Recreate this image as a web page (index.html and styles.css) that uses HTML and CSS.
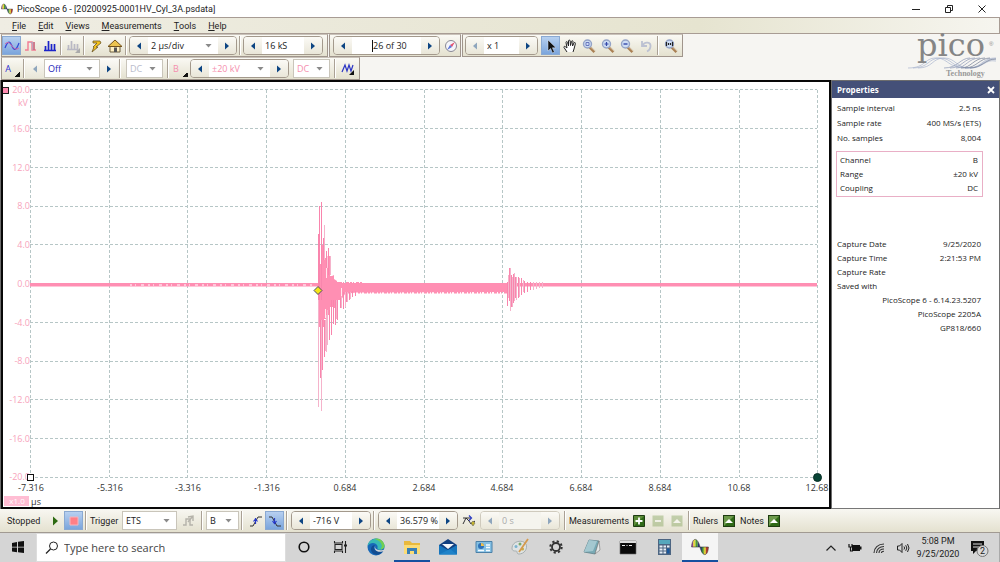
FILE: index.html
```html
<!DOCTYPE html>
<html lang="en">
<head>
<meta charset="utf-8">
<title>PicoScope 6</title>
<link rel="stylesheet" href="styles.css">
</head>
<body>
<svg class="defs" aria-hidden="true">
  <defs><clipPath id="sine"><path d="M.5 8C1-1 6-1 8 8zM8 8c2 9 7 9 7.500 0z"/></clipPath></defs>
  <symbol id="left" viewBox="0 0 8 8"><path d="M6 0.500V7.500L2 4z" fill="currentColor"/></symbol>
  <symbol id="right" viewBox="0 0 8 8"><path d="M2 0.500V7.500L6 4z" fill="currentColor"/></symbol>
  <symbol id="lens" viewBox="0 0 16 16"><path d="M8 8.500L13.500 14" stroke="#a97f52" stroke-width="2.600"/><path d="M9 8.500L14 13" stroke="#d8c4a8" stroke-width="1"/><circle cx="6.500" cy="6" r="4" fill="#cddcf4" stroke="#94a3c6" stroke-width="1.400"/></symbol>
  <symbol id="pico" viewBox="0 0 16 16"><g clip-path="url(#sine)"><path d="M0 0h2.200v16H0z" fill="#a0489a"/><path d="M2 0h2v16H2z" fill="#e3d53a"/><path d="M4 0h2v16H4z" fill="#4a9a30"/><path d="M6 0h4v16H6z" fill="#24307c"/><path d="M9.600 8h1.800v8H9.600z" fill="#3e8c34"/><path d="M11.400 8h1.800v8h-1.800z" fill="#dccb2c"/><path d="M13.200 8H16v8h-2.800z" fill="#b5392f"/></g><path d="M.5 8C1-1 6-1 8 8zM8 8c2 9 7 9 7.500 0z" fill="none" stroke="#333" stroke-width=".5"/></symbol>
  <symbol id="up" viewBox="0 0 12 12"><rect x=".5" y=".5" width="11" height="11" fill="#2f6a17" stroke="#1f3d12"/><path d="M1 1h10L1 11z" fill="#6d9a4b"/><path d="M2 8L6 4l4 4z" fill="#fff"/></symbol>
</svg>
<div class="app">
  <header class="titlebar">
    <svg class="i12" viewBox="0 0 16 16"><use href="#pico"/></svg>
    <span class="title">PicoScope 6 - [20200925-0001HV_Cyl_3A.psdata]</span>
    <div class="window-buttons">
      <button aria-label="Minimize"><svg class="i10" viewBox="0 0 10 10"><path d="M1 5.500h8" stroke="#222"/></svg></button>
      <button aria-label="Restore"><svg class="i10" viewBox="0 0 10 10"><path d="M1.500 3.500h5v5h-5zM3.500 3V1.500h5v5H7" fill="none" stroke="#222"/></svg></button>
      <button aria-label="Close"><svg class="i10" viewBox="0 0 10 10"><path d="M1.500 1.500l7 7M8.500 1.500l-7 7" stroke="#222"/></svg></button>
    </div>
  </header>
  <nav class="menubar">
    <button><u>F</u>ile</button><button><u>E</u>dit</button><button><u>V</u>iews</button><button><u>M</u>easurements</button><button><u>T</u>ools</button><button><u>H</u>elp</button>
  </nav>
  <div class="tools">
    <div class="rows">
      <div class="row">
        <div class="group capture">
          <button class="tb on" aria-label="Scope mode"><svg class="i16" viewBox="0 0 16 16"><path d="M1 10C4 2 6 3 8 8s4 5 7-3" fill="none" stroke="#3346d6" stroke-width="1.200"/><path d="M1 6c3-3 5-1 7 2s4 4 7 2" fill="none" stroke="#d46aa8"/></svg></button>
          <button class="tb" aria-label="Persistence mode"><svg class="i16" viewBox="0 0 16 16"><path d="M2 12h3V4h4v8h4" fill="none" stroke="#f27c93" stroke-width="1.400"/><path d="M7 4h5v8H9V6" fill="#a9a2c2" opacity=".7"/><path d="M11 4v8" stroke="#e0404f"/></svg></button>
          <button class="tb" aria-label="Spectrum mode"><svg class="i16" viewBox="0 0 16 16"><path d="M2 12.500h12M3.500 12V8M6.500 12V3M9.500 12V6M12.500 12V6" stroke="#1b23c9" stroke-width="1.700"/></svg></button>
          <i class="sep"></i>
          <button class="tb" aria-label="Hidden view" disabled><svg class="i16" viewBox="0 0 16 16"><path d="M2 11.500h10M3.500 11V7M6.500 11V3M9.500 11V6M12.500 13V6" stroke="#b9b8c4" stroke-width="1.700"/><path d="M15 10v5h-5z" fill="#aaa"/></svg></button>
          <i class="sep"></i>
          <button class="tb" aria-label="Automatic setup"><svg class="i16" viewBox="0 0 16 16"><path d="M5 3h7l1 2-5 4h2l-6 5 2-5H5l4-4H5z" fill="#f3c21d" stroke="#6b5627" stroke-width=".8"/></svg></button>
          <button class="tb" aria-label="Home"><svg class="i16" viewBox="0 0 16 16"><path d="M3 8h10v6H3z" fill="#fff1c4" stroke="#6b5c3d"/><path d="M8 2l7 6.500H1z" fill="#edc44f" stroke="#74531d"/><path d="M7 9.500h3V14H7z" fill="#555"/></svg></button>
          <i class="sep"></i>
          <div class="spin"><button aria-label="Shorter time"><svg><use href="#left"/></svg></button><span class="select w70"><select aria-label="Timebase"><option>2 µs/div</option></select></span><button aria-label="Longer time"><svg><use href="#right"/></svg></button></div>
          <i class="sep"></i>
          <div class="spin"><button aria-label="Fewer samples"><svg><use href="#left"/></svg></button><input class="w42" aria-label="Samples" value="16 kS"><button aria-label="More samples"><svg><use href="#right"/></svg></button></div>
        </div>
        <div class="group buffer">
          <div class="spin"><button aria-label="Previous waveform"><svg><use href="#left"/></svg></button><span class="field w69"><i class="caret"></i><input aria-label="Waveform" value="26 of 30"></span><button aria-label="Next waveform"><svg><use href="#right"/></svg></button></div>
          <button class="tb" aria-label="Buffer navigator"><svg class="i16" viewBox="0 0 16 16"><circle cx="8" cy="8" r="5.500" fill="#f5f5fa" stroke="#888894"/><path d="M12 4L9 9 7 7z" fill="#e35271"/><path d="M4 12l3-5 2 2z" fill="#5a74d8"/></svg></button>
        </div>
        <div class="group zoomer">
          <div class="spin"><button aria-label="Zoom down" disabled><svg><use href="#left"/></svg></button><input class="w35" aria-label="Zoom factor" value="x 1"><button aria-label="Zoom up"><svg><use href="#right"/></svg></button></div>
          <button class="tb on" aria-label="Select"><svg class="i16" viewBox="0 0 16 16"><path d="M5 2v11l2.600-2.500L9.500 15l1.900-.9-2-4.300H13z" fill="#111" stroke="#dfe8f8" stroke-width=".5"/></svg></button>
          <button class="tb" aria-label="Pan"><svg class="i16" viewBox="0 0 16 16"><path d="M5 14L2 9.500c-.5-1 .7-1.600 1.500-.7L5 10 4 4.500c0-1.200 1.300-1.200 1.600 0L6.500 8 6.500 3c0-1.200 1.600-1.200 1.700 0L8.500 7.500 9.500 3.500c.3-1.200 1.600-1 1.500.3L10.500 8l1.500-3c.5-1 1.700-.5 1.400.6L12 11l-1 3" fill="#fff" stroke="#222"/></svg></button>
          <button class="tb" aria-label="Marquee zoom"><svg class="i16" viewBox="0 0 16 16"><use href="#lens"/><path d="M5 4.500h3v3H5z" fill="none" stroke="#6877bd"/></svg></button>
          <button class="tb" aria-label="Zoom in"><svg class="i16" viewBox="0 0 16 16"><use href="#lens"/><path d="M4.500 6h4M6.500 4v4" stroke="#3447a8" stroke-width="1.200"/></svg></button>
          <button class="tb" aria-label="Zoom out"><svg class="i16" viewBox="0 0 16 16"><use href="#lens"/><path d="M4.500 6h4" stroke="#3447a8" stroke-width="1.400"/></svg></button>
          <button class="tb" aria-label="Undo zoom" disabled><svg class="i16" viewBox="0 0 16 16"><path d="M4 3v5h5M4.500 7.500C7 3 13 4 12.500 8.500 12.300 11 11 12.500 9 13.500" fill="none" stroke="#bcc1d2" stroke-width="1.800"/></svg></button>
          <i class="sep"></i>
          <button class="tb" aria-label="Zoom to full view"><svg class="i16" viewBox="0 0 16 16"><use href="#lens"/><path d="M3.500 4v4M9.500 4v4M5.500 5v2M7.500 5v2" stroke="#222" stroke-width="1.200"/></svg></button>
        </div>
      </div>
      <div class="row">
        <div class="group channels">
          <button class="ch a" aria-label="Channel A options">A</button>
          <i class="sep"></i>
          <div class="flat"><button aria-label="A range down" disabled><svg><use href="#left"/></svg></button><span class="select boxed blue w56"><select aria-label="Channel A range"><option>Off</option></select></span><button aria-label="A range up"><svg><use href="#right"/></svg></button></div>
          <i class="sep"></i>
          <span class="select boxed dim w37"><select aria-label="Channel A coupling" disabled><option>DC</option></select></span>
          <i class="sep"></i>
          <button class="ch b" aria-label="Channel B options">B</button>
          <div class="spin"><button aria-label="B range down"><svg><use href="#left"/></svg></button><span class="select pink w61"><select aria-label="Channel B range"><option>±20 kV</option></select></span><button aria-label="B range up"><svg><use href="#right"/></svg></button></div>
          <span class="select boxed pink w37"><select aria-label="Channel B coupling"><option>DC</option></select></span>
          <i class="sep"></i>
          <button class="tb wide" aria-label="Digital channels"><svg class="i16" viewBox="0 0 16 16"><path d="M2 11L5 4l2 6 2-6 2 6 2-6" fill="none" stroke="#2b35c4" stroke-width="1.200"/><path d="M14 9v5H9z" fill="#111"/></svg></button>
        </div>
      </div>
    </div>
    <svg class="logo" viewBox="0 0 92 44" role="img" aria-label="pico Technology">
      <g fill="none" stroke="#a9b4ce" stroke-width=".7"><path d="M0 33C18 33 16 23 28 23S40 33 58 33 72 23 88 23"/><path d="M5 33C21 33 20 23 32 23S44 33 60 33 74 23 88 24"/><path d="M10 33C25 33 24 23 36 23S48 33 62 33 76 24 88 26"/><path d="M36 33C50 33 52 23 62 23M42 33C54 33 56 23 67 23M48 33C58 33 60 23 72 23" stroke="#8995b3"/><path d="M53 33C63 33 66 23 77 23M57 33C68 33 72 23 82 23M62 33C74 33 77 24 88 24" stroke="#6d7891"/></g>
      <text x="9" y="21" class="logo-name">pico</text><text x="81" y="11" class="logo-mark">®</text>
      <text x="38" y="41" class="logo-sub">Technology</text>
    </svg>
  </div>
  <main class="main">
    <section class="scope">
      <svg class="plot" viewBox="3 82 826 425" role="img" aria-label="Channel B waveform">
        <g class="grid"><path d="M30 89.500H817M30 128.500H817M30 167.500H817M30 206.500H817M30 244.500H817M30 283.500H817M30 322.500H817M30 361.500H817M30 399.500H817M30 438.500H817M30 477.500H817"/><path d="M30.500 90V477M109.500 90V477M187.500 90V477M266.500 90V477M345.500 90V477M424.500 90V477M502.500 90V477M581.500 90V477M660.500 90V477M739.500 90V477M817.500 90V477"/></g>
        <g class="volts"><text x="30" y="93">20.0</text><text x="28" y="106">kV</text><text x="30" y="132">16.0</text><text x="30" y="171">12.0</text><text x="30" y="209">8.0</text><text x="30" y="248">4.0</text><text x="30" y="287">0.0</text><text x="30" y="326">-4.0</text><text x="30" y="364">-8.0</text><text x="30" y="403">-12.0</text><text x="30" y="442">-16.0</text><text x="30" y="480">-20.0</text></g>
        <g class="times"><text x="31" y="491">-7.316</text><text x="110" y="491">-5.316</text><text x="188" y="491">-3.316</text><text x="267" y="491">-1.316</text><text x="345" y="491">0.684</text><text x="424" y="491">2.684</text><text x="502" y="491">4.684</text><text x="581" y="491">6.684</text><text x="660" y="491">8.684</text><text x="739" y="491">10.68</text><text x="817" y="491">12.68</text><text x="36" y="505">µs</text></g>
        <rect x="4" y="496" width="25" height="10" fill="#ffbdd3"/><text x="17" y="504" class="scale">x1.0</text>
        <g class="wave">
          <path d="M30 283H817V286.500H30z"/>
          <path d="M318 283V264H322V245H324.500V258H326.500V256H327.500V268H328.500V256H330V276H332L334 275V279L337 281V282H340V283H507V292L356 292.500 345 294 341 300H337.500V308H333V307H330V315H326V319H324V327H319L318 290z"/>
          <path class="strong" d="M318.500 234V300M319.500 206V300M321.500 202V300M323.500 238V260M326.500 251V270M328.500 248V275M320.500 320V378M322.500 320V370M324.500 320V357M329.500 310V340M331.500 300V335M333.500 300V324M335.500 300V325M337.500 300V320M340.500 298V308M343.500 292V309M346.500 292V302M349.500 292V300M352.500 291V297M355.500 291V296M507.500 282V306M509.500 268V301M511.500 275V307M513.500 274V303M515.500 277V298M518.500 277V298M521.500 278V295M524.500 281V293M527.500 282V292M530.500 282V290"/>
          <path class="pale" d="M318.500 300V407M321.500 320V411M324.500 225V260M326.500 315V352M327.500 310V345M330.500 256V275M325.500 320V351M336.500 300V319M341.500 295V308M345.500 292V307M347.500 292V302M350.500 292V299M508.500 275V298M510.500 268V311M512.500 277V307M514.500 273V301M516.500 277V300M519.500 278V297M523.500 280V292M533.500 282V290M536.500 282V289M539.500 282V288M542.500 282V288"/>
          <path class="teeth" d="M358 292.500H507"/>
          <path class="teeth upper" d="M340 282.500H362"/>
          <path class="dots" d="M130 285H312"/>
          <path class="cut" d="M326.500 268V278M325.500 309V318M341.500 288V296"/>
        </g>
        <path d="M318 286.500l4 4-4 4-4-4z" fill="#f5e616" stroke="#4a4a63"/>
        <rect x="2.500" y="87.500" width="6" height="6" fill="#ff8cb2" stroke="#222"/>
        <rect x="27.500" y="474.500" width="6" height="6" fill="#fff" stroke="#111"/>
        <circle cx="817.500" cy="477.500" r="4" fill="#084536" stroke="#072c24"/>
      </svg>
    </section>
    <aside class="props">
      <div class="props-head"><h2>Properties</h2><button aria-label="Close properties"><svg class="i10" viewBox="0 0 10 10"><path d="M2 2l6 6M8 2l-6 6" stroke="#fff" stroke-width="1.800"/></svg></button></div>
      <div class="props-body">
        <dl class="sampling"><dt>Sample interval</dt><dd>2.5 ns</dd><dt>Sample rate</dt><dd>400 MS/s (ETS)</dd><dt>No. samples</dt><dd>8,004</dd></dl>
        <dl class="channel"><dt>Channel</dt><dd>B</dd><dt>Range</dt><dd>±20 kV</dd><dt>Coupling</dt><dd>DC</dd></dl>
        <dl class="saved"><dt>Capture Date</dt><dd>9/25/2020</dd><dt>Capture Time</dt><dd>2:21:53 PM</dd><dt>Capture Rate</dt><dd></dd><dt>Saved with</dt><dd></dd><dd class="full">PicoScope 6 - 6.14.23.5207</dd><dd class="full">PicoScope 2205A</dd><dd class="full">GP818/660</dd></dl>
      </div>
    </aside>
  </main>
  <div class="status">
    <span class="stopped">Stopped</span>
    <button class="tb" aria-label="Start"><svg class="i16" viewBox="0 0 16 16"><path d="M6 3.500v9L11 8z" fill="#2d6a12"/></svg></button>
    <button class="tb on" aria-label="Stop"><svg class="i16" viewBox="0 0 16 16"><path d="M4 4h8v8H4z" fill="#ff7f86" stroke="#f4b6bd"/></svg></button>
    <i class="sep"></i>
    <label class="trigger" for="trigger">Trigger</label>
    <span class="select boxed w55"><select id="trigger"><option>ETS</option></select></span>
    <button class="tb wide" aria-label="Advanced triggers" disabled><svg class="i16" viewBox="0 0 16 16"><path d="M3 12h3V6h4v6h3" fill="none" stroke="#b5b3aa" stroke-width="1.400"/><path d="M8 4l5-1v5M13 3L8 9" fill="none" stroke="#b5b3aa" stroke-width="1.400"/></svg></button>
    <i class="sep"></i>
    <span class="select boxed w33"><select aria-label="Trigger source"><option>B</option></select></span>
    <i class="sep"></i>
    <button class="tb" aria-label="Rising edge"><svg class="i16" viewBox="0 0 16 16"><path d="M2 13h3l5-9h4" fill="none" stroke="#333"/><path d="M7.500 5v6M5.500 8.500L7.500 6l2 2.500" fill="none" stroke="#2638c8" stroke-width="1.200"/></svg></button>
    <button class="tb on" aria-label="Falling edge"><svg class="i16" viewBox="0 0 16 16"><path d="M2 4h3l5 9h4" fill="none" stroke="#333"/><path d="M7.500 5v6M5.500 8l2 2.500 2-2.500" fill="none" stroke="#2638c8" stroke-width="1.200"/></svg></button>
    <i class="sep"></i>
    <div class="spin"><button aria-label="Lower threshold"><svg><use href="#left"/></svg></button><input class="w42" aria-label="Threshold" value="-716 V"><button aria-label="Raise threshold"><svg><use href="#right"/></svg></button></div>
    <i class="sep"></i>
    <div class="spin"><button aria-label="Less pre-trigger"><svg><use href="#left"/></svg></button><input class="w42" aria-label="Pre-trigger" value="36.579 %"><button aria-label="More pre-trigger"><svg><use href="#right"/></svg></button></div>
    <button class="tb wide" aria-label="Post-trigger delay"><svg class="i16" viewBox="0 0 16 16"><path d="M2 11L5 5l3 3 2 3 4-3M2 5h8" fill="none" stroke="#333"/><path d="M8 2.500L10.500 5 8 7.500" fill="none" stroke="#2638c8" stroke-width="1.200"/><path d="M12 8l2 2-2 3-2-3z" fill="#c4b42d" stroke="#555" stroke-width=".5"/></svg></button>
    <div class="spin off"><button aria-label="Less delay" disabled><svg><use href="#left"/></svg></button><input class="w42" aria-label="Delay" value="0 s" disabled><button aria-label="More delay" disabled><svg><use href="#right"/></svg></button></div>
    <i class="sep"></i>
    <span class="measure">Measurements</span>
    <button class="tb" aria-label="Add measurement"><svg class="i12" viewBox="0 0 12 12"><path d="M.5.500h11v11H.5z" fill="#2f6a17" stroke="#1f3d12"/><path d="M1 1h10L1 11z" fill="#5c8c38"/><path d="M2.500 6h7M6 2.500v7" stroke="#fff" stroke-width="1.800"/></svg></button>
    <button class="tb" aria-label="Delete measurement" disabled><svg class="i12 faded" viewBox="0 0 12 12"><path d="M.5.500h11v11H.5z" fill="#7c9e52"/><path d="M3 6h6" stroke="#fff" stroke-width="1.800"/></svg></button>
    <button class="tb" aria-label="Edit measurement" disabled><svg class="i12 faded" viewBox="0 0 12 12"><path d="M.5.500h11v11H.5z" fill="#7c9e52"/><path d="M2 8l4-4 4 4z" fill="#fff"/></svg></button>
    <i class="sep"></i>
    <span class="rulers">Rulers</span>
    <button class="tb wide" aria-label="Rulers"><svg class="i12"><use href="#up"/></svg></button>
    <span class="notes">Notes</span>
    <button class="tb" aria-label="Notes"><svg class="i12"><use href="#up"/></svg></button>
  </div>
</div>
<footer class="taskbar">
  <button class="task" aria-label="Start"><svg class="i16" viewBox="0 0 16 16"><path d="M2 4l5-1v4.700H2zM8 2.800L14 2v5.700H8zM2 8.500h5v4.700l-5-.8zM8 8.500h6V14l-6-.8z" fill="#111"/></svg></button>
  <label class="search"><svg class="i16" viewBox="0 0 16 16"><circle cx="9.500" cy="6" r="4" fill="none" stroke="#222"/><path d="M6.500 9L2 13.500" stroke="#222" stroke-width="1.200"/></svg><input type="search" placeholder="Type here to search" aria-label="Search"></label>
  <button class="task" aria-label="Cortana"><svg class="i20" viewBox="0 0 20 20"><circle cx="10" cy="10" r="4.800" fill="none" stroke="#111" stroke-width="1.600"/></svg></button>
  <button class="task" aria-label="Task view"><svg class="i20" viewBox="0 0 20 20"><path d="M5 7.500h7v5H5zM4.500 4v2h8V4M4.500 16v-2h8v2M15.500 4v12" fill="none" stroke="#222" stroke-width="1.100"/><path d="M14 7.500h3v2h-3z" fill="#222"/></svg></button>
  <button class="task" aria-label="Edge"><svg class="i20" viewBox="0 0 20 20"><circle cx="10" cy="10" r="8.500" fill="#1768b8"/><path d="M1.600 9C3 0 16 -1 18.500 8.500c.5 3-3 5-6 4-2-.8-.5-1.700-1-3.500C10 5 4 5 1.600 9z" fill="#38b9b5"/><path d="M8 2c5-2 10 2 10.500 6.500.3 2-2 4-4 4C18 8 14 3 8 2z" fill="#71cf50"/><path d="M9 8c-3 3 0 8 8 6-3 5-11 5-12-1-.3-2 1-5 4-5z" fill="#124c91"/><path d="M9.500 8.500c-1.500 2.500 1 5.500 7.500 4.500l2-1v2l-4 .8C9 15 7.500 11 9.500 8.500z" fill="#d5d5d5"/></svg></button>
  <button class="task open" aria-label="File Explorer"><svg class="i20" viewBox="0 0 20 20"><path d="M2 4h6l2 2h8v11H2z" fill="#e9b93d"/><path d="M2 8h16v9H2z" fill="#fbdc76"/><path d="M5 17v-6h10v6h-3v-3H8v3z" fill="#397fb6"/></svg></button>
  <button class="task" aria-label="Mail"><svg class="i20" viewBox="0 0 20 20"><path d="M1 8l9-6 9 6v9H1z" fill="#123f80"/><path d="M4 7h12L10 12z" fill="#f5f7fa"/><path d="M1 8l9 5 9-5v9.500H1z" fill="#1675bd"/><path d="M1 17.500L12 12l7 5.500z" fill="#1f83c9"/></svg></button>
  <button class="task" aria-label="Control Panel"><svg class="i20" viewBox="0 0 20 20"><path d="M2 4.500h16v11H2z" fill="#83bfe3" stroke="#4a80a8"/><circle cx="7" cy="9" r="3" fill="#2f72b7"/><path d="M7 9V6a3 3 0 013 3z" fill="#f1c04d"/><path d="M12 8h4M12 10.500h4M4 13.500h6M12 13.500h4" stroke="#f5fbff" stroke-width="1.300"/></svg></button>
  <button class="task" aria-label="Paint"><svg class="i20" viewBox="0 0 20 20"><path d="M2 11c0-7 11-9 14-4 2 5-2 10-7 10-3 0-1-3-3-3s-4 0-4-3z" fill="#dfe3e3" stroke="#99a3a5" stroke-width=".8"/><circle cx="6" cy="9.500" r="1.500" fill="#7bb3d0"/><circle cx="10" cy="7" r="1.500" fill="#78a86a"/><circle cx="12.500" cy="12" r="1.600" fill="#c8ac48"/><path d="M18 2L9 15" stroke="#d59a4d" stroke-width="1.800"/></svg></button>
  <button class="task" aria-label="Settings"><svg class="i20" viewBox="0 0 20 20"><circle cx="10" cy="10" r="4" fill="none" stroke="#333" stroke-width="1.800"/><circle cx="10" cy="10" r="5.700" fill="none" stroke="#333" stroke-width="2" stroke-dasharray="2.200 2.277"/></svg></button>
  <button class="task" aria-label="Notepad"><svg class="i20" viewBox="0 0 20 20"><path d="M7 3l10 1-4 13-11-2z" fill="#78a9b4" stroke="#60818a" stroke-width=".8"/><path d="M7 3l8 1-4 10-9 1z" fill="#a4c8d0"/><path d="M17 4l1 9-5 4z" fill="#e5e9e9" stroke="#777" stroke-width=".6"/></svg></button>
  <button class="task" aria-label="Command Prompt"><svg class="i20" viewBox="0 0 20 20"><path d="M2 4h16v13H2z" fill="#0a0a0a" stroke="#666" stroke-width=".6"/><path d="M2 4h16v2H2z" fill="#ddd"/><path d="M4 8.500h3M8.500 8.500h1M11 8.500h3" stroke="#eee" stroke-width="1.200"/></svg></button>
  <button class="task" aria-label="Calculator"><svg class="i20" viewBox="0 0 20 20"><path d="M4 2h13v16H4z" fill="#4c6582"/><path d="M5 3h11v4H5z" fill="#55a7bd"/><path d="M5.500 8.500h3v2h-3zM9.500 8.500h2.500v2H9.500zM5.500 11.500h3v2h-3zM9.500 11.500h2.500v2H9.500zM5.500 14.500h3v2h-3zM9.500 14.500h2.500v2H9.500zM13 8.500h2.500v2H13z" fill="#e7eef5"/><path d="M13 11.500h2.500v5H13z" fill="#18579d"/></svg></button>
  <button class="task open active" aria-label="PicoScope"><svg class="i18"><use href="#pico"/></svg></button>
  <div class="tray">
    <button aria-label="Show hidden icons"><svg class="i14" viewBox="0 0 14 14"><path d="M2.500 9.500L7 5l4.500 4.500" fill="none" stroke="#222" stroke-width="1.200"/></svg></button>
    <button aria-label="Battery"><svg class="i14" viewBox="0 0 14 14"><path d="M4 4h8v6H4zM12 5.500h1.500v3H12z" fill="#111"/><path d="M1 3v3h3V3M2.500 6v4H5" fill="none" stroke="#111" stroke-width="1.200"/></svg></button>
    <button aria-label="Wi-Fi"><svg class="i14" viewBox="0 0 14 14"><path d="M2 12C2 7 6 3 12 3M4.500 12c0-3.500 3-6.500 7.500-6.500M7 12c0-2.500 2-4 5-4M9.500 12c0-1.200 1-1.700 2.500-1.700" fill="none" stroke="#333" stroke-width="1.100"/></svg></button>
    <button aria-label="Volume"><svg class="i14" viewBox="0 0 14 14"><path d="M1.500 5h2L6 2.500v9L3.500 9h-2zM8 5.500q1.200 1.500 0 3M9.700 4.200q2.300 2.800 0 5.600M11.500 3q3 4 0 8" fill="none" stroke="#222"/></svg></button>
    <div class="clock"><time>5:08 PM</time><time>9/25/2020</time></div>
    <button class="notify" aria-label="2 notifications"><svg class="i20" viewBox="0 0 20 20"><path d="M2 3h13v10H7l-3 3v-3H2z" fill="#111"/><path d="M4 6h9M4 9h7" stroke="#ddd"/><circle cx="13.500" cy="13" r="5.500" fill="#d9d9d9" stroke="#777"/><text x="13.500" y="16" class="badge">2</text></svg></button>
  </div>
</footer>
</body>
</html>
```

FILE: styles.css
```css
* { box-sizing: border-box; }
body { margin: 0; height: 100vh; display: flex; flex-direction: column; font: 9px/14px Roboto, "Open Sans", sans-serif; color: #222; background: #fff; }
button, input, select { font: inherit; color: inherit; border: 0; padding: 0; margin: 0; background: none; border-radius: 0; outline: 0; }
input, select, .plot, .ch, .props { font-family: "Open Sans", "Noto Sans", sans-serif; }
button { display: flex; align-items: center; justify-content: center; }
svg { display: block; flex: none; }
.defs { position: absolute; width: 0; height: 0; }
.i10 { width: 10px; height: 10px; }
.i12 { width: 12px; height: 12px; }
.i14 { width: 14px; height: 14px; }
.i16 { width: 16px; height: 16px; }
.i18 { width: 18px; height: 18px; }
.i20 { width: 20px; height: 20px; }
.faded { opacity: .4; }
.w33 { width: 33px; }
.w35 { width: 35px; }
.w37 { width: 37px; }
.w42 { width: 42px; }
.w55 { width: 55px; }
.w56 { width: 56px; }
.w61 { width: 61px; }
.w69 { width: 69px; }
.w70 { width: 70px; }

.app { flex: 1; min-height: 0; display: flex; flex-direction: column; }
.titlebar { display: flex; align-items: center; gap: 4px; height: 17px; padding-left: 1px; }
.title { flex: 1; }
.window-buttons { display: flex; margin-right: 2px; }
.window-buttons button { width: 33px; height: 16px; }
.menubar { display: flex; gap: 12px; height: 17px; padding-left: 12px; border: 1px solid #a89c94; border-width: 1px 1px 1px 0; background: linear-gradient(90deg, #efede3, #e6e4d0 70%, #f6f5ef); }
.menubar button { height: 15px; }

.tools { display: flex; justify-content: space-between; height: 46px; padding-left: 1px; background: #f6f5f2; }
.row { display: flex; gap: 1px; height: 23px; }
.group { display: flex; align-items: center; height: 23px; border: 1px solid #a0958c; border-top-color: #c9c2b9; background: linear-gradient(#faf9f4, #e4e1cf); }
.capture { padding-right: 3px; }
.buffer { padding-left: 3px; gap: 1px; }
.zoomer { padding: 0 2px; }
.zoomer .spin { margin-right: 3px; }
.capture .spin { margin: 0 1px; }
.tb { width: 19px; height: 19px; }
.tb.wide { width: 22px; }
.tb.on { border: 1px solid #8aa9d2; background: linear-gradient(#b7d0f0, #7ba5dc); }
.sep { width: 2px; height: 19px; margin: 0 2px; border-left: 1px solid #aaa195; background: #fff; flex: none; }
.capture .sep, .channels .sep { margin: 0 1px; }
.spin, .flat { display: flex; height: 19px; }
.spin { border: 1px solid #a3998c; border-radius: 4px; overflow: hidden; }
.spin button, .flat button { width: 18px; color: #0d4583; background: linear-gradient(#fbfaf6, #e9e6d8); }
.spin button:disabled, .flat button:disabled { color: #8fa6bd; }
.spin svg, .flat svg { width: 8px; height: 8px; }
.spin input { min-width: 0; padding-left: 3px; background: #fff; }
.spin.off { margin-right: 2px; border-color: #cfcabd; color: #aaa; }
.spin.off input { background: #f5f4ee; }
.field { display: flex; align-items: center; padding-left: 20px; background: #fff; }
.spin .field input { width: 48px; padding: 0; }
.caret { width: 1px; height: 12px; background: #111; }
.select { display: grid; align-items: center; background: #fff; }
.select select { grid-area: 1 / 1; width: 100%; height: 17px; padding-left: 3px; appearance: none; opacity: 1; }
.select::after { content: ""; grid-area: 1 / 1; justify-self: end; width: 7px; height: 4px; margin-right: 6px; background: #8a8a8a; clip-path: polygon(0 0, 100% 0, 50% 100%); pointer-events: none; }
.boxed { height: 19px; border: 1px solid #c9c5ba; }
.blue { color: #2323b8; }
.pink { color: #f58fae; }
.dim { color: #b9bccb; }
.ch { width: 20px; height: 19px; padding-right: 8px; background: linear-gradient(135deg, transparent 50%, #111 50%) right 2px bottom 1px / 5px 5px no-repeat; }
.ch.a { color: #2b2bd0; }
.ch.b { color: #f58fae; }
.channels > .boxed { margin: 0 3px 0 4px; }
.logo { width: 92px; height: 44px; margin-top: 1px; overflow: visible; }
.logo-name { font: 32px "DejaVu Serif", serif; fill: #858585; }
.logo-mark { font: 6px "Liberation Sans", sans-serif; fill: #888; }
.logo-sub { font: bold 8px "Liberation Serif", serif; fill: #999; }

.main { flex: 1; min-height: 0; display: flex; padding: 0 1px; background: #6d6d6d; }
.scope { flex: 1; min-width: 0; border: 2px solid #080808; background: #fff; }
.plot { width: 100%; height: 100%; }
.grid path { fill: none; stroke: #b6c6c6; stroke-dasharray: 3 2; }
.plot text { font-size: 9px; }
.volts { fill: #f7a3bb; text-anchor: end; }
.times { fill: #333; text-anchor: middle; }
.plot .scale { font-size: 8px; fill: #fff; text-anchor: middle; }
.wave { fill: #ff8fb3; }
.wave .strong, .wave .pale { fill: none; stroke: #f985ad; }
.wave .pale { stroke: #f5b3cb; }
.wave .teeth { fill: none; stroke: #ff8fb3; stroke-width: 2; stroke-dasharray: 2 1 1 2 3 1; }
.wave .upper { stroke-width: 1; }
.wave .dots { stroke: #fff; stroke-dasharray: 2 3 1 5 3 4; }
.wave .cut { stroke: #fff; opacity: .8; }
.props { width: 168px; padding: 1px 0 0 1px; }
.props-head { display: flex; align-items: center; justify-content: space-between; height: 17px; padding: 0 3px 0 5px; color: #fff; background: #445078; }
.props-head h2 { margin: 0; font-size: 8px; }
.props-body { height: calc(100% - 17px); padding: 3px 18px 0 5px; background: #fff; border-bottom: 1px solid #777; font-size: 8px; }
dl { display: grid; grid-template-columns: auto auto; margin: 0; }
dt, dd { margin: 0; white-space: nowrap; }
dd { text-align: right; }
.sampling { grid-auto-rows: 15px; }
.channel { margin: 5px -2px 0 -1px; padding: 1px 4px 1px 3px; border: 1px solid #e9afc6; grid-auto-rows: 14px; }
.saved { margin-top: 40px; grid-auto-rows: 14px; }
.full { grid-column: 1 / -1; }

.status { display: flex; align-items: center; height: 24px; padding-left: 7px; border-bottom: 1px solid #a19a92; background: linear-gradient(#f8f7f2, #e4e1cf); }
.stopped { width: 38px; }
.trigger { width: 32px; }
.measure { width: 60px; }
.rulers { width: 25px; }
.notes { width: 24px; }
.status .sep { margin: 0 3px 0 2px; }

.taskbar { display: flex; height: 29px; background: #d5d5d5; }
.task { width: 36px; height: 29px; border-bottom: 2px solid transparent; }
.task.open { border-bottom-color: #1550a0; }
.task.active { background: #f5f5f5; }
.search { display: flex; align-items: center; gap: 4px; width: 250px; padding-left: 7px; background: #fff; border: 1px solid #ddd; font-size: 11px; }
.search input { flex: 1; min-width: 0; appearance: none; }
.search input::placeholder { color: #444; opacity: 1; }
.tray { display: flex; align-items: center; margin-left: auto; padding-right: 2px; border-right: 1px solid #aaa; }
.tray button { width: 24px; height: 29px; }
.clock { display: flex; flex-direction: column; width: 46px; text-align: center; line-height: 13px; }
.tray .notify { width: 36px; }
.badge { font-size: 9px; text-anchor: middle; fill: #222; }
```
